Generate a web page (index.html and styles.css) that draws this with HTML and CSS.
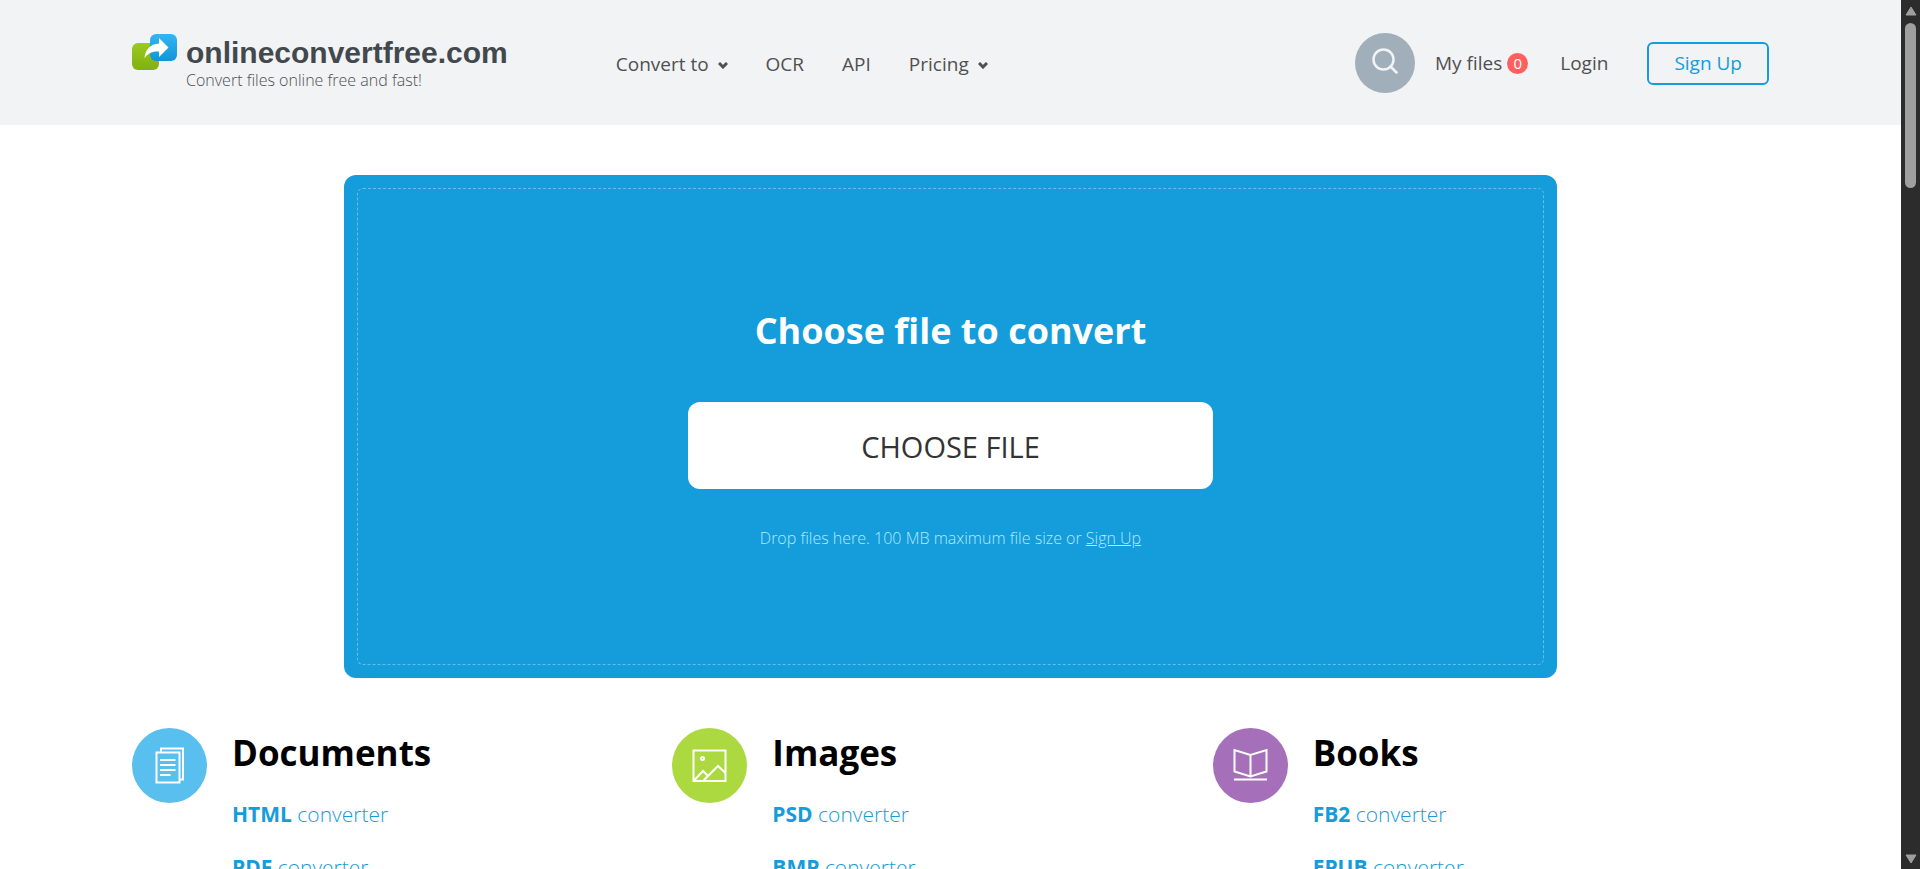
FILE: index.html
```html
<!DOCTYPE html>
<html lang="en">
<head>
  <meta charset="UTF-8">
  <meta name="viewport" content="width=device-width, initial-scale=1.0">
  <title>Online Convert Free</title>
  <link rel="stylesheet" href="styles.css">
</head>
<body>
  <div class="page">
    <header class="header">
      <a class="logo" href="#">
        <svg class="logo-icon" viewBox="0 0 45 36" aria-hidden="true">
          <defs>
            <linearGradient id="green" x1="0" y1="0" x2="0" y2="1">
              <stop offset="0" stop-color="#9acb1f"/>
              <stop offset="1" stop-color="#80b013"/>
            </linearGradient>
            <linearGradient id="blue" x1="0" y1="0" x2="0" y2="1">
              <stop offset="0" stop-color="#33b6f0"/>
              <stop offset="1" stop-color="#1195d8"/>
            </linearGradient>
          </defs>
          <rect x="0" y="9" width="27" height="27" rx="6" fill="url(#green)"/>
          <rect x="18" y="0" width="27" height="27" rx="6" fill="url(#blue)"/>
          <path d="M27 4L36.500 13.500L27 23V17.500C20.500 17 15.500 19 12.500 24.500C13 16 18 10 27 9.500Z" fill="#fff"/>
        </svg>
        <span class="logo-text">
          <span class="logo-name">onlineconvertfree.com</span>
          <span class="logo-tagline">Convert files online free and fast!</span>
        </span>
      </a>
      <nav class="nav">
        <a href="#">Convert to
          <svg class="arrow" viewBox="0 0 10 7" aria-hidden="true"><path d="M1 1L5 5L9 1"/></svg>
        </a>
        <a href="#">OCR</a>
        <a href="#">API</a>
        <a href="#">Pricing
          <svg class="arrow" viewBox="0 0 10 7" aria-hidden="true"><path d="M1 1L5 5L9 1"/></svg>
        </a>
      </nav>
      <div class="user">
        <button class="search" type="button" aria-label="Search">
          <svg viewBox="0 0 26 26" aria-hidden="true"><circle cx="11.500" cy="11.500" r="10"/><path d="M18.500 18.500L24.500 24.500"/></svg>
        </button>
        <a class="my-files" href="#">My files <span class="badge">0</span></a>
        <a class="login" href="#">Login</a>
        <a class="sign-up" href="#">Sign Up</a>
      </div>
    </header>

    <main class="main">
      <section class="upload">
        <div class="upload-inner">
          <h1>Choose file to convert</h1>
          <button class="choose" type="button">CHOOSE FILE</button>
          <p>Drop files here. 100 MB maximum file size or <a href="#">Sign Up</a></p>
        </div>
      </section>

      <section class="categories">
        <div class="category">
          <span class="category-icon documents">
            <svg viewBox="0 0 75 75" aria-hidden="true">
              <path d="M29 24V20.500H51V51.500H48"/>
              <rect x="24.500" y="24.500" width="23" height="30"/>
              <path d="M28 32H43.500M28 37H43.500M28 42H43.500M28 47H38.500"/>
            </svg>
          </span>
          <div>
            <h2>Documents</h2>
            <ul>
              <li><a href="#"><b>HTML</b> converter</a></li>
              <li><a href="#"><b>PDF</b> converter</a></li>
            </ul>
          </div>
        </div>
        <div class="category">
          <span class="category-icon images">
            <svg viewBox="0 0 75 75" aria-hidden="true">
              <rect x="21.500" y="22.500" width="32" height="30.500"/>
              <circle cx="30.500" cy="30.500" r="1.500"/>
              <path d="M22 52.500L31 43L35.500 47.500M31.500 52.500L46 38L53.500 45"/>
            </svg>
          </span>
          <div>
            <h2>Images</h2>
            <ul>
              <li><a href="#"><b>PSD</b> converter</a></li>
              <li><a href="#"><b>BMP</b> converter</a></li>
            </ul>
          </div>
        </div>
        <div class="category">
          <span class="category-icon books">
            <svg viewBox="0 0 75 75" aria-hidden="true">
              <path d="M37.500 27L21.500 22V43.500L37.500 48.500L53.500 43.500V22ZM37.500 27V48.500M21 51.500H54"/>
            </svg>
          </span>
          <div>
            <h2>Books</h2>
            <ul>
              <li><a href="#"><b>FB2</b> converter</a></li>
              <li><a href="#"><b>EPUB</b> converter</a></li>
            </ul>
          </div>
        </div>
      </section>
    </main>
  </div>

  <div class="scrollbar" aria-hidden="true">
    <svg viewBox="0 0 12 10"><path d="M6 1L11 9H1Z"/></svg>
    <div class="track"><div class="thumb"></div></div>
    <svg viewBox="0 0 12 10"><path d="M6 9L1 1H11Z"/></svg>
  </div>
</body>
</html>
```
FILE: styles.css
```css
* {
  box-sizing: border-box;
}
body {
  margin: 0;
  height: 100vh;
  display: flex;
  overflow: hidden;
  background-color: #fff;
  color: #000;
  font-family: "Open Sans", "Noto Sans", sans-serif;
}
a {
  color: inherit;
  text-decoration: none;
}
.page {
  flex: 1;
  min-width: 0;
  overflow: hidden;
}

/* header */
.header {
  display: flex;
  align-items: flex-start;
  padding: 33px 132px 30px;
  background-color: #f1f3f5;
  color: #505050;
  font-size: 19px;
}
.logo {
  display: flex;
  gap: 9px;
  padding-top: 1px;
}
.logo-icon {
  width: 45px;
  height: 36px;
}
.logo-text {
  display: flex;
  flex-direction: column;
}
.logo-name {
  font-family: "Liberation Sans", Arial, sans-serif;
  font-size: 30px;
  font-weight: bold;
  line-height: 38px;
  color: #43484d;
}
.logo-tagline {
  font-size: 16px;
  font-weight: 300;
  line-height: 16px;
}
.nav {
  display: flex;
  gap: 38px;
  margin-left: 108px;
  line-height: 62px;
}
.arrow {
  width: 10px;
  height: 7px;
  margin-left: 4px;
  vertical-align: 2px;
  fill: none;
  stroke: #505050;
  stroke-width: 3;
}
.user {
  display: flex;
  align-items: center;
  margin-left: auto;
}
.search {
  display: flex;
  align-items: center;
  justify-content: center;
  width: 60px;
  height: 60px;
  padding: 0 0 4px;
  border: none;
  border-radius: 50%;
  background-color: #a1afba;
  cursor: pointer;
}
.search svg {
  width: 26px;
  height: 26px;
  fill: none;
  stroke: #f1f3f5;
  stroke-width: 2.5;
  stroke-linecap: round;
}
.my-files {
  display: flex;
  align-items: center;
  gap: 5px;
  margin-left: 20px;
}
.badge {
  width: 21px;
  height: 21px;
  border-radius: 50%;
  background-color: #ff5f5f;
  color: #fff;
  font-size: 15px;
  line-height: 21px;
  text-align: center;
}
.login {
  margin-left: 32px;
}
.sign-up {
  margin-left: 39px;
  padding: 0 25px;
  border: 2px solid #159cda;
  border-radius: 6px;
  color: #159cda;
  line-height: 39px;
}

/* upload box */
.main {
  padding: 50px 132px 0;
}
.upload {
  max-width: 1213px;
  margin: 0 auto;
  padding: 13px;
  border-radius: 12px;
  background-color: #159cda;
  color: #fff;
}
.upload-inner {
  padding: 116px 0 113px;
  border: 1px dashed #68beea;
  border-radius: 6px;
  text-align: center;
}
.upload h1 {
  margin: 0 0 45px;
  font-size: 36px;
  line-height: 52px;
}
.choose {
  display: block;
  width: 525px;
  height: 87px;
  margin: 0 auto;
  padding: 1px 0 0;
  border: none;
  border-radius: 12px;
  background-color: #fff;
  color: #333;
  font-family: inherit;
  font-size: 29px;
  cursor: pointer;
}
.upload p {
  margin: 36px 0 0;
  color: #b0eaff;
  font-size: 16px;
  font-weight: 300;
  line-height: 26px;
}
.upload p a {
  text-decoration: underline;
}

/* categories */
.categories {
  display: grid;
  grid-template-columns: repeat(3, 1fr);
  margin-top: 50px;
  padding-right: 16px;
}
.category {
  display: flex;
  gap: 25px;
}
.category-icon {
  width: 75px;
  height: 75px;
  border-radius: 50%;
}
.category-icon svg {
  display: block;
  fill: none;
  stroke: #fff;
  stroke-width: 2;
}
.documents {
  background-color: #58bfef;
}
.images {
  background-color: #abd93f;
}
.books {
  background-color: #a66fba;
}
.category h2 {
  margin: 0 0 10px;
  font-size: 35px;
  line-height: 50px;
}
.category ul {
  margin: 0;
  padding: 0;
  list-style: none;
}
.category li {
  color: #159cda;
  font-size: 21px;
  font-weight: 300;
  line-height: 53px;
}
.category b {
  font-weight: 700;
}

/* scrollbar */
.scrollbar {
  display: flex;
  flex-direction: column;
  align-items: center;
  width: 19px;
  padding: 6px 0 5px;
  background-color: #2c2c2c;
}
.scrollbar svg {
  width: 12px;
  height: 10px;
  fill: #9f9f9f;
  stroke: #9f9f9f;
  stroke-linejoin: round;
}
.track {
  flex: 1;
  padding: 7px 0;
}
.thumb {
  width: 11px;
  height: 165px;
  border-radius: 6px;
  background-color: #9f9f9f;
}
```
